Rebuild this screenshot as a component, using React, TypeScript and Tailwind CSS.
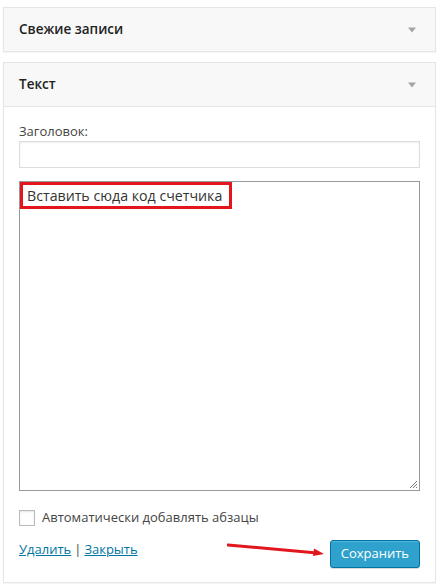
import React from "react";

function Caret() {
  return (
    <svg width="10" height="8" viewBox="0 0 10 8" className="shrink-0">
      <path d="M1 1.5h8L5 6.5z" fill="#a0a5aa" />
    </svg>
  );
}

function WidgetHeader({ title }: { title: string }) {
  return (
    <div className="flex h-[43px] items-center justify-between bg-[#f8f8f8] pl-[15px] pr-[18px]">
      <h3 className="text-[13.5px] font-semibold text-[#222]">{title}</h3>
      <Caret />
    </div>
  );
}

export default function App() {
  return (
    <div
      className="min-h-[585px] w-[442px] bg-white pl-[3px] pr-[6px] pt-[7px] text-[#444]"
      style={{ fontFamily: '"Open Sans", "Noto Sans", sans-serif' }}
    >
      {/* Свежие записи */}
      <div className="border border-[#e5e5e5] shadow-[0_1px_1px_rgba(0,0,0,0.04)]">
        <WidgetHeader title="Свежие записи" />
      </div>

      {/* Текст */}
      <div className="mt-[10px] border border-[#e5e5e5] shadow-[0_1px_1px_rgba(0,0,0,0.04)]">
        <WidgetHeader title="Текст" />
        <div className="border-t border-[#e5e5e5] bg-white px-[15px] pb-[14px] pt-[15px]">
          <label className="block text-[13px] leading-[18px]">Заголовок:</label>
          <div className="mt-[1px] h-[27px] w-full border border-[#ddd] bg-white shadow-[inset_0_1px_2px_rgba(0,0,0,0.07)]" />

          <div className="relative mt-[13px] h-[310px] w-full border border-[#999] bg-white">
            <div className="inline-block border-[3px] border-[#e2171e] py-[1px] pl-[4px] pr-[7px] text-[14.2px] leading-[19px] text-[#333]">
              Вставить сюда код счетчика
            </div>
            <svg
              width="10"
              height="10"
              viewBox="0 0 10 10"
              className="absolute bottom-[1px] right-[1px]"
            >
              <path d="M9 2L2 9M9 5L5 9M9 8L8 9" stroke="#777" strokeWidth="1" />
            </svg>
          </div>

          <div className="mt-[17px] flex h-[20px] items-center gap-[7px]">
            <div className="h-[16px] w-[16px] border border-[#bbb] bg-white shadow-[inset_0_1px_2px_rgba(0,0,0,0.1)]" />
            <span className="text-[13px] text-[#444]">Автоматически добавлять абзацы</span>
          </div>

          <div className="mt-[12px] flex items-start justify-between">
            <div className="flex items-center gap-[3px] text-[13px] leading-[18px]">
              <a className="text-[#0074a2] underline">Удалить</a>
              <span className="text-[#444]">|</span>
              <a className="text-[#0074a2] underline">Закрыть</a>
            </div>
            <div className="relative">
              <svg
                width="100"
                height="16"
                viewBox="0 0 100 16"
                className="absolute right-[93px] top-[2px]"
              >
                <path d="M1 3L90 11" stroke="#e2171e" strokeWidth="3" strokeLinecap="round" />
                <path d="M87 6.5L97 12L86 14z" fill="#e2171e" />
              </svg>
              <button className="h-[28px] rounded-[3px] border border-[#0074a2] bg-[#2ea2cc] px-[10px] text-[13px] text-white shadow-[inset_0_1px_0_rgba(120,200,230,0.5),0_1px_0_rgba(0,0,0,0.15)]">
                Сохранить
              </button>
            </div>
          </div>
        </div>
      </div>
    </div>
  );
}
